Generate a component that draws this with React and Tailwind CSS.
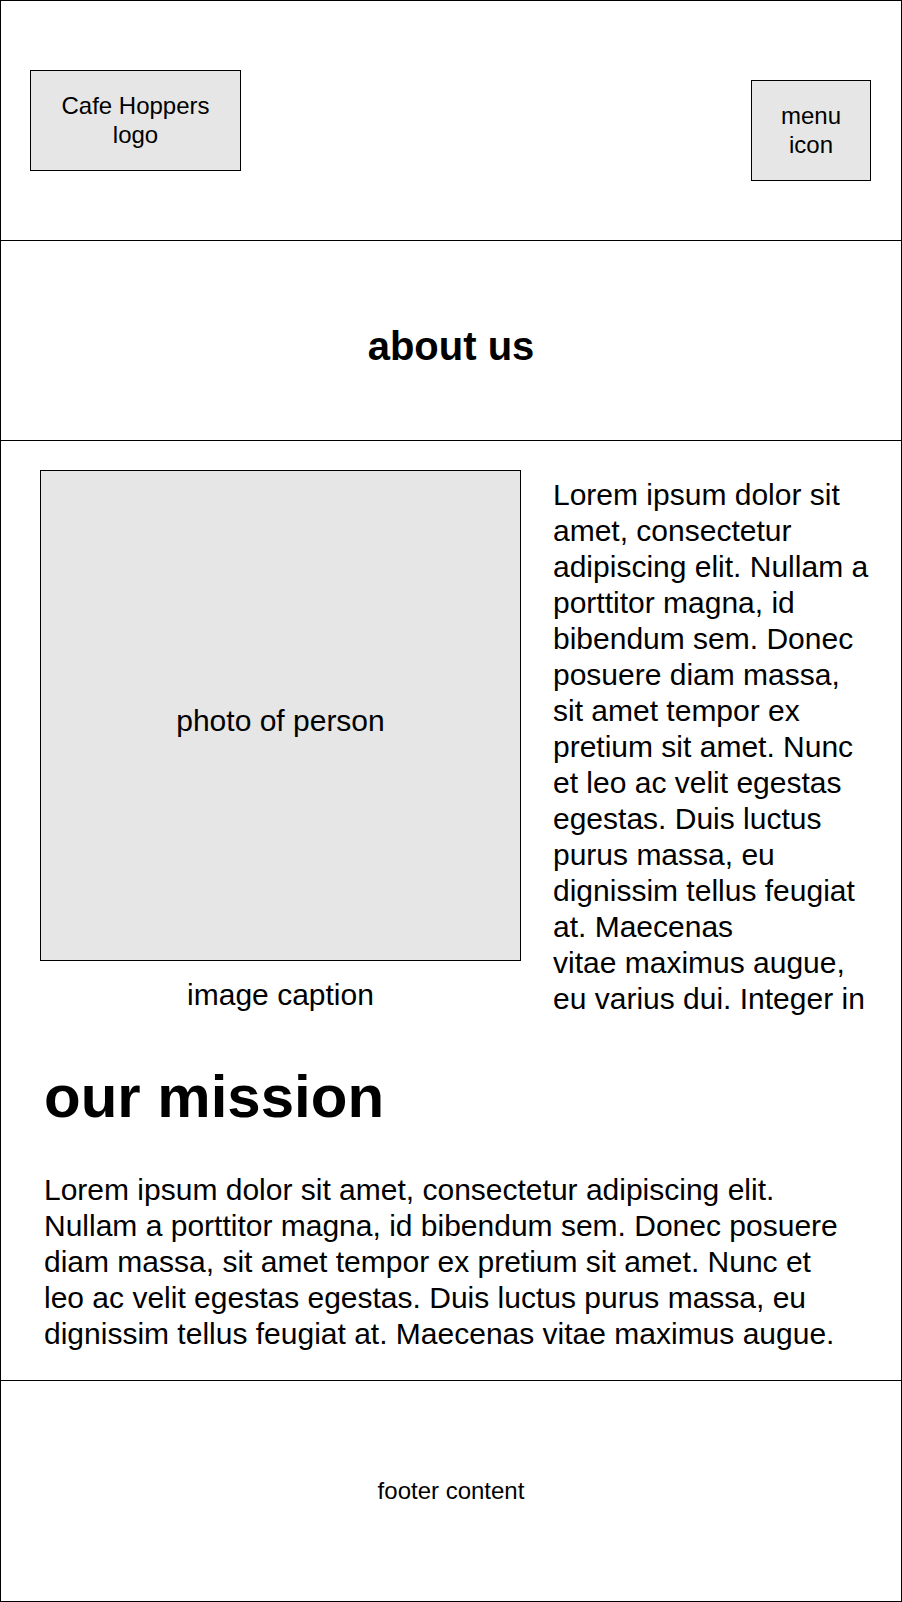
import React from "react";

const sideText =
  "Lorem ipsum dolor sit amet, consectetur adipiscing elit. Nullam a porttitor magna, id bibendum sem. Donec posuere diam massa, sit amet tempor ex pretium sit amet. Nunc et leo ac velit egestas egestas. Duis luctus purus massa, eu dignissim tellus feugiat at. Maecenas";

const missionText =
  "Lorem ipsum dolor sit amet, consectetur adipiscing elit. Nullam a porttitor magna, id bibendum sem. Donec posuere diam massa, sit amet tempor ex pretium sit amet. Nunc et leo ac velit egestas egestas. Duis luctus purus massa, eu dignissim tellus feugiat at. Maecenas vitae maximus augue.";

function Header() {
  return (
    <header className="h-[240px] border-b border-black flex justify-between items-start pl-[29px] pr-[30px]">
      <div className="mt-[69px] w-[211px] h-[101px] border border-black bg-[#e6e6e6] flex items-center justify-center text-center text-[24px] leading-[1.2]">
        Cafe Hoppers
        <br />
        logo
      </div>
      <div className="mt-[79px] w-[120px] h-[101px] border border-black bg-[#e6e6e6] flex items-center justify-center text-center text-[24px] leading-[1.2]">
        menu
        <br />
        icon
      </div>
    </header>
  );
}

function AboutContent() {
  return (
    <section className="h-[940px] border-b border-black pt-[29px]">
      <div className="flex items-start pl-[39px]">
        <div className="w-[481px] flex flex-col">
          <div className="h-[491px] border border-black bg-[#e6e6e6] flex items-center justify-center pt-[10px] text-[30px]">
            photo of person
          </div>
          <p className="mt-[16px] text-center text-[30px] leading-[36px]">image caption</p>
        </div>
        <p className="ml-[32px] mt-[7px] w-[320px] text-[30px] leading-[36px]">
          {sideText}
          <br />
          vitae maximus augue, eu varius dui. Integer in
        </p>
      </div>

      <div className="pl-[43px] mt-[44px]">
        <h2 className="text-[60px] font-bold leading-[72px]">our mission</h2>
        <p className="mt-[39px] w-[805px] text-[30px] leading-[36px]">{missionText}</p>
      </div>
    </section>
  );
}

export default function App() {
  return (
    <div className="w-[902px] h-[1602px] border border-black bg-white text-black font-['Liberation_Sans',Arial,sans-serif] flex flex-col">
      <Header />
      <section className="h-[200px] border-b border-black flex items-center justify-center pt-[10px]">
        <h1 className="text-[40px] font-bold leading-[48px]">about us</h1>
      </section>
      <AboutContent />
      <footer className="flex-1 flex items-center justify-center text-[24px]">footer content</footer>
    </div>
  );
}
